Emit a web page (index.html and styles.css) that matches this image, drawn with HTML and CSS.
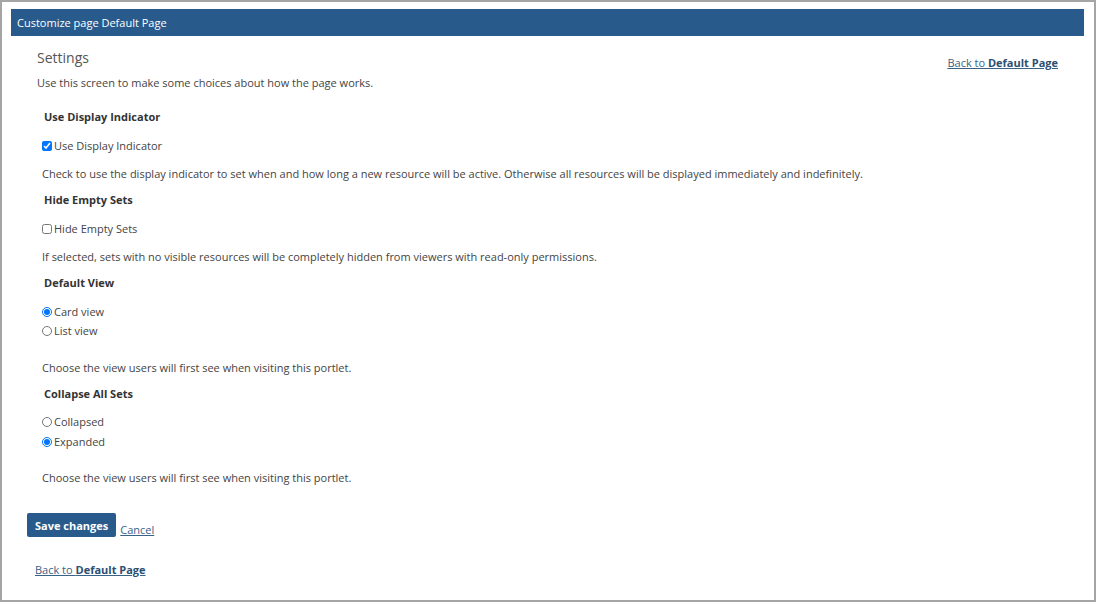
FILE: index.html
```html
<!DOCTYPE html>
<html lang="en">
<head>
  <meta charset="UTF-8">
  <title>Customize page Default Page</title>
  <link rel="stylesheet" href="styles.css">
</head>
<body>
  <div class="frame">
    <div class="titlebar">Customize page Default Page</div>

    <div class="page-head">
      <div>
        <h2>Settings</h2>
        <p class="intro">Use this screen to make some choices about how the page works.</p>
      </div>
      <a href="#" class="back back-top">Back to <b>Default Page</b></a>
    </div>

    <div class="settings">
      <h3>Use Display Indicator</h3>
      <label class="opt"><input type="checkbox" checked>Use Display Indicator</label>
      <p class="help">Check to use the display indicator to set when and how long a new resource will be active. Otherwise all resources will be displayed immediately and indefinitely.</p>

      <h3>Hide Empty Sets</h3>
      <label class="opt"><input type="checkbox">Hide Empty Sets</label>
      <p class="help">If selected, sets with no visible resources will be completely hidden from viewers with read-only permissions.</p>

      <h3>Default View</h3>
      <label class="opt"><input type="radio" name="view" checked>Card view</label>
      <label class="opt"><input type="radio" name="view">List view</label>
      <p class="help gap">Choose the view users will first see when visiting this portlet.</p>

      <h3>Collapse All Sets</h3>
      <label class="opt"><input type="radio" name="collapse">Collapsed</label>
      <label class="opt"><input type="radio" name="collapse" checked>Expanded</label>
      <p class="help gap">Choose the view users will first see when visiting this portlet.</p>
    </div>

    <div class="actions">
      <button>Save changes</button>
      <a href="#" class="cancel">Cancel</a>
    </div>

    <a href="#" class="back back-bottom">Back to <b>Default Page</b></a>
  </div>
</body>
</html>
```

FILE: styles.css
```css
body {
  margin: 0;
  font-family: 'Open Sans', sans-serif;
  color: #444;
  background: #fff;
}
.frame {
  width: 1096px;
  height: 602px;
  box-sizing: border-box;
  border: 2px solid #a5a5a5;
  padding: 7px 10px 0 9px;
}
.titlebar {
  background-color: #285b8c;
  color: white;
  font-size: 11px;
  height: 27px;
  line-height: 27px;
  padding-left: 6px;
}
.page-head {
  display: flex;
  justify-content: space-between;
  padding: 0 26px;
  margin-top: 12px;
}
h2 {
  font-size: 14px;
  font-weight: normal;
  color: #555;
  margin: 0;
  line-height: 20px;
}
.intro {
  font-size: 11px;
  margin: 7px 0 0;
  line-height: 16px;
}
a {
  color: #3a6186;
}
.back {
  font-size: 11px;
}
.back b {
  color: #2c4f72;
}
.back-top {
  margin-top: 7px;
}
.settings {
  padding-left: 31px;
  margin-top: 18px;
}
h3 {
  font-size: 11px;
  font-weight: bold;
  color: #333;
  margin: 0 0 11px 2px;
  line-height: 16px;
}
.opt {
  display: flex;
  align-items: center;
  font-size: 11px;
  line-height: 16px;
  height: 19.5px;
}
.opt input {
  margin: 0 2px 0 0;
  width: 10px;
  height: 10px;
}
.help {
  font-size: 11px;
  margin: 10.5px 0 10px;
  line-height: 16px;
}
.help.gap {
  margin-top: 18.5px;
}
.actions {
  display: flex;
  align-items: flex-end;
  margin: 27px 0 0 16px;
}
.actions button {
  background-color: #285b8c;
  color: white;
  font-family: 'Open Sans', sans-serif;
  font-weight: bold;
  font-size: 11px;
  border: none;
  border-radius: 2px;
  height: 24px;
  padding: 0 8px;
  margin-right: 4px;
}
.cancel {
  font-size: 11px;
  line-height: 14px;
}
.back-bottom {
  display: inline-block;
  margin: 25px 0 0 24px;
}
```
